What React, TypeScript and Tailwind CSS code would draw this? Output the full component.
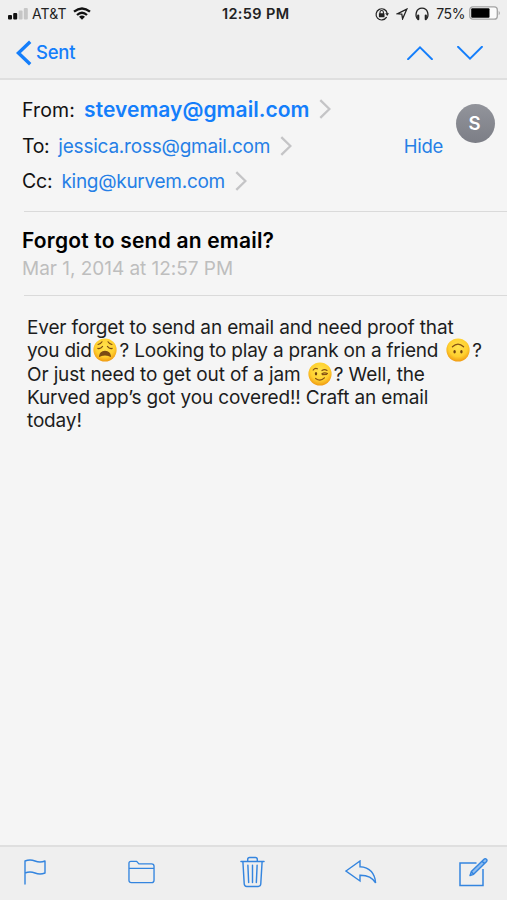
import { ReactNode } from 'react'

type IconProps = { className?: string; children: ReactNode; box: string }

const Icon = ({ className = '', children, box }: IconProps) => (
  <svg
    viewBox={box}
    fill="none"
    stroke="currentColor"
    strokeLinecap="round"
    strokeLinejoin="round"
    className={`shrink-0 ${className}`}
  >
    {children}
  </svg>
)

const EmojiFace = ({ kind }: { kind: 'weary' | 'upside' | 'wink' }) => (
  <svg viewBox="0 0 24 24" className="inline-block w-6 h-6 -mt-2 align-[-5px] shrink-0">
    <defs>
      <radialGradient id={`face-${kind}`} cx="50%" cy="38%" r="62%">
        <stop offset="0" stopColor="#ffe34f" />
        <stop offset="0.65" stopColor="#ffd02f" />
        <stop offset="1" stopColor="#f09a12" />
      </radialGradient>
    </defs>
    <circle cx="12" cy="12" r="11.6" fill={`url(#face-${kind})`} />
    {kind === 'weary' && (
      <g fill="none" stroke="#7a4a14" strokeWidth="1.1" strokeLinecap="round">
        <path d="M5 6.5Q7.8 6 9 3.8M19 6.5Q16.2 6 15 3.8" />
        <path d="M4.8 10.4Q7.6 11.2 9.6 8.4M19.2 10.4Q16.4 11.2 14.4 8.4" />
        <path d="M6.6 18.2Q7.2 13.6 12 13.4Q16.8 13.6 17.4 18.2Q12 15.8 6.6 18.2Z" fill="#7a4a14" />
      </g>
    )}
    {kind === 'upside' && (
      <g>
        <path d="M6.4 8.8Q12 3.4 17.6 8.8" fill="none" stroke="#855114" strokeWidth="1.2" strokeLinecap="round" />
        <ellipse cx="8.6" cy="13.8" rx="1.2" ry="1.7" fill="#70410f" />
        <ellipse cx="15.4" cy="13.8" rx="1.2" ry="1.7" fill="#70410f" />
      </g>
    )}
    {kind === 'wink' && (
      <g fill="none" stroke="#855114" strokeWidth="1.2" strokeLinecap="round">
        <ellipse cx="8" cy="11.8" rx="1.2" ry="1.8" fill="#70410f" stroke="none" />
        <path d="M5.2 8Q7 5.6 9.4 6.8M14 8.6Q16.4 6.8 19 8.4" />
        <path d="M13.8 11.9Q16.4 9.8 19.4 11.6M14.6 12.6L18.6 12.4" />
        <path d="M7.6 16.4Q12.4 20 16.4 15.8" />
      </g>
    )}
  </svg>
)

const Chevron = () => (
  <Icon box="0 0 12 20" className="w-3 h-5 text-[#c4c4c6]">
    <path d="M1.3 1.2L10.4 10L1.3 18.8" strokeWidth="2.3" strokeLinecap="butt" strokeLinejoin="miter" />
  </Icon>
)

const StatusBar = () => (
  <div className="relative h-7 flex items-center justify-between pl-2 pr-[6px] text-[#222]">
    <div className="flex items-center -mt-px">
      <svg viewBox="0 0 20 12" className="w-5 h-3 mt-px">
        <rect x="0" y="7" width="4" height="4.5" rx="1" fill="#111" />
        <rect x="5.2" y="5" width="4" height="6.5" rx="1" fill="#111" />
        <rect x="10.6" y="2.5" width="4" height="9" rx="1" fill="#c6c6c6" />
        <rect x="15.8" y="0" width="4" height="11.5" rx="1" fill="#c6c6c6" />
      </svg>
      <span className="ml-[4px] text-[14px] tracking-[0.1px]">AT&amp;T</span>
      <svg viewBox="0 0 18 13" className="ml-[6px] w-[18px] h-[13px]" fill="none" stroke="#111" strokeWidth="2.3">
        <path d="M1 4.7Q9 -1.8 17 4.7" />
        <path d="M4 8Q9 3.6 14 8" />
        <path d="M6 9.8Q9 7.4 12 9.8L9 12.8Z" fill="#111" stroke="none" />
      </svg>
    </div>
    <span className="absolute left-[222px] text-[14.5px] font-semibold tracking-[0.35px]">12:59 PM</span>
    <div className="flex items-center -mt-px">
      <Icon box="0 0 14 14" className="w-[14px] h-[14px]">
        <path d="M11.4 10.4A5.6 5.6 0 1 1 12.2 6.4" strokeWidth="1.2" />
        <path d="M10.2 6.2H14L12.2 8.9Z" fill="currentColor" stroke="none" />
        <rect x="3.9" y="6.3" width="5.6" height="4" rx="0.5" fill="currentColor" stroke="none" />
        <path d="M5 6.6V5.2A1.7 1.7 0 0 1 8.4 5.2V6.6" strokeWidth="1.1" />
      </Icon>
      <Icon box="0 0 12 12" className="ml-[7px] w-3 h-3">
        <path d="M10.8 1.2L1.2 5.8L5.8 6.2L6.6 10.8Z" strokeWidth="1.3" strokeLinejoin="miter" />
      </Icon>
      <Icon box="0 0 14 14" className="ml-[7px] w-[14px] h-[14px]">
        <path d="M1.9 11.2C0.4 8.8 0.5 1.2 7 1.2S13.6 8.8 12.1 11.2" strokeWidth="1.3" />
        <path d="M3.2 8.6V12.2M10.8 8.6V12.2" strokeWidth="2.2" />
      </Icon>
      <span className="ml-[7px] text-[14px] tracking-[-0.4px]">75%</span>
      <svg viewBox="0 0 32 14" className="ml-[4px] w-8 h-[14px] -mt-px">
        <rect x="0.8" y="0.8" width="27.5" height="12.4" rx="3" fill="#fafafa" stroke="#a3a3a3" strokeWidth="1.3" />
        <rect x="2.2" y="2.2" width="18.3" height="9.6" rx="1" fill="#000" />
        <path d="M29.7 4.7Q32 7 29.7 9.3Z" fill="#a3a3a3" />
      </svg>
    </div>
  </div>
)

const NavBar = () => (
  <div className="h-[50px] flex items-center justify-between pl-4 pr-6 text-[#147efb]">
    <div className="flex items-center">
      <Icon box="0 0 16 26" className="w-4 h-[26px]">
        <path d="M14.2 1.8L2.4 13L14.2 24.2" strokeWidth="3.4" strokeLinecap="butt" strokeLinejoin="miter" />
      </Icon>
      <span className="ml-[4px] text-[18.5px] tracking-[-0.25px] font-medium">Sent</span>
    </div>
    <div className="flex items-center gap-6">
      <Icon box="0 0 26 14" className="w-[26px] h-[14px]">
        <path d="M1 13.2L13 1.4L25 13.2" strokeWidth="1.9" strokeLinejoin="miter" />
      </Icon>
      <Icon box="0 0 26 14" className="w-[26px] h-[14px]">
        <path d="M1 0.8L13 12.6L25 0.8" strokeWidth="1.9" strokeLinejoin="miter" />
      </Icon>
    </div>
  </div>
)

const Recipients = () => (
  <div className="flex h-[131px] pl-[22px] pr-3 pt-3">
    <div className="flex-1 flex flex-col whitespace-nowrap">
      <div className="h-9 flex items-center">
        <span className="text-[19.5px] tracking-[0.15px] text-[#111] pt-0.5">From:</span>
        <span className="ml-[9px] -mt-px text-[21px] tracking-[0.03px] font-semibold text-[#147efb]">stevemay@gmail.com</span>
        <span className="ml-[10px] -mt-0.5"><Chevron /></span>
      </div>
      <div className="h-9 flex items-center pt-px">
        <span className="text-[19.5px] tracking-[-0.35px] text-[#111]">To:</span>
        <span className="ml-[9px] pt-px text-[19px] tracking-[-0.22px] text-[#257fe6]">jessica.ross@gmail.com</span>
        <span className="ml-[10px] -mt-0.5"><Chevron /></span>
        <span className="ml-auto mr-[13px] text-[18.5px] tracking-[-0.3px] text-[#257fe6]">Hide</span>
      </div>
      <div className="h-9 flex items-center">
        <span className="text-[19.5px] tracking-[-0.2px] text-[#111]">Cc:</span>
        <span className="ml-[9px] pt-px text-[19px] tracking-[-0.28px] text-[#257fe6]">king@kurvem.com</span>
        <span className="ml-[10px] -mt-0.5"><Chevron /></span>
      </div>
    </div>
    <div className="mt-3 w-[39px] h-[39px] rounded-full bg-linear-to-b from-[#92949b] to-[#7c7e86] flex items-center justify-center text-white font-semibold text-[18.5px] pr-0.5">
      S
    </div>
  </div>
)

const Toolbar = () => (
  <div className="h-[55px] border-t-2 border-[#dfdfdf] bg-[#efefef] flex items-center justify-between pl-6 pr-[19px] pb-[3px] text-[#3485df]">
    <Icon box="0 0 22 26" className="w-[22px] h-[26px]">
      <path d="M1 25V2Q6 0 11 2T21 2V14Q16 16 11 14T1 14" strokeWidth="1.4" />
    </Icon>
    <Icon box="0 0 28 24" className="w-[27px] h-6 ml-0.5">
      <path d="M1 3Q1 1 3 1H9L11.3 3.6H24.5Q27 3.6 27 6V20.5Q27 23 24.5 23H3.5Q1 23 1 20.5ZM1 8.2H27" strokeWidth="1.4" />
    </Icon>
    <Icon box="0 0 26 32" className="w-[25px] h-8 ml-1.5">
      <path d="M1 5H25M8 5V3Q8 1 10 1H16Q18 1 18 3V5M3 5L4.4 28.5Q4.6 31 7 31H19Q21.4 31 21.6 28.5L23 5M8.2 9L9 27M13 9V27M17.8 9L17 27" strokeWidth="1.5" />
    </Icon>
    <Icon box="0 0 32 24" className="w-8 h-6 mr-0.5">
      <path d="M1 11L15 1V6.7C25 7 30 14 30.6 23C27.5 17.5 23 15.2 15 15.3V21Z" strokeWidth="1.4" strokeLinejoin="miter" />
    </Icon>
    <Icon box="0 0 30 30" className="w-[30px] h-[30px]">
      <path d="M18.5 6H2V28.5H25V12" strokeWidth="1.5" strokeLinecap="butt" strokeLinejoin="miter" />
      <path d="M12 18.5L13.3 14.6L26 2.2Q27.2 1 28.4 2.2T28.4 4.7L15.6 17.3ZM24 4.2L26.4 6.6M13.3 14.6L15.6 17.3" strokeWidth="1.4" fill="#8fbdf0" />
    </Icon>
  </div>
)

export default function App() {
  return (
    <div className="w-[507px] h-[900px] flex flex-col overflow-hidden bg-[#f5f5f5] font-['Inter',sans-serif]">
      <header className="h-20 shrink-0 bg-[#efefef] border-b-2 border-[#dfdfdf]">
        <StatusBar />
        <NavBar />
      </header>
      <main className="flex-1">
        <Recipients />
        <div className="ml-6 h-px bg-[#dadada]" />
        <div className="h-[83px] pl-[22px] pt-[14px] whitespace-nowrap">
          <h1 className="w-fit text-[21px] leading-[30px] font-semibold tracking-[0.2px] text-black">Forgot to send an email?</h1>
          <p className="w-fit text-[19px] leading-[26px] tracking-[-0.03px] text-[#bebebe]">Mar 1, 2014 at 12:57 PM</p>
        </div>
        <div className="ml-6 h-px bg-[#dadada]" />
        <div className="pl-[27px] pt-5 text-[19px] leading-[23.3px] text-[#1d1d1d] whitespace-nowrap">
          <p className="h-[23.3px] w-fit tracking-[-0.15px]">Ever forget to send an email and need proof that</p>
          <p className="h-[23.3px] w-fit tracking-[-0.22px]">you did<span className="inline-block w-px" /><EmojiFace kind="weary" /><span className="ml-[3px]">? Looking to play a prank on a friend </span><span className="inline-block w-[3px]" /><EmojiFace kind="upside" /><span className="ml-[2px]">?</span></p>
          <p className="h-[23.3px] w-fit tracking-[-0.13px]">Or just need to get out of a jam <span className="inline-block w-0.5" /><EmojiFace kind="wink" /><span className="ml-[2px]">? Well, the</span></p>
          <p className="h-[23.3px] w-fit tracking-[-0.15px]">Kurved app’s got you covered!! Craft an email</p>
          <p className="h-[23.3px] w-fit tracking-[-0.15px]">today!</p>
        </div>
      </main>
      <Toolbar />
    </div>
  )
}
